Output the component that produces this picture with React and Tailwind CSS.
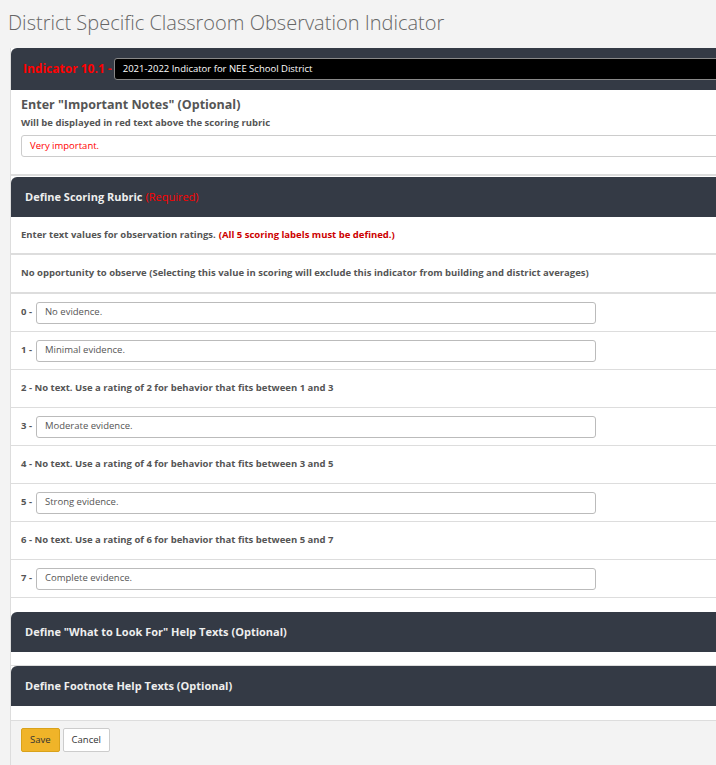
export default function App() {
  const rows = [
    { n: '0', v: 'No evidence.' },
    { n: '1', v: 'Minimal evidence.' },
    { n: '2', t: 'No text. Use a rating of 2 for behavior that fits between 1 and 3' },
    { n: '3', v: 'Moderate evidence.' },
    { n: '4', t: 'No text. Use a rating of 4 for behavior that fits between 3 and 5' },
    { n: '5', v: 'Strong evidence.' },
    { n: '6', t: 'No text. Use a rating of 6 for behavior that fits between 5 and 7' },
    { n: '7', v: 'Complete evidence.' },
  ];
  return (
    <div className="h-[765px] w-[716px] overflow-hidden bg-[#f3f3f3] text-[#555]" style={{ fontFamily: '"Open Sans", sans-serif' }}>
      <h1 className="h-[48px] pl-[8px] pt-[9px] text-[20px] font-light leading-[28px] text-[#666]">
        District Specific Classroom Observation Indicator
      </h1>
      <div className="ml-[10px] w-[740px] border-l border-[#ddd] bg-white">
        <div className="flex h-[42px] items-center rounded-tl-[6px] bg-[#343a45] pl-[12px]">
          <span className="text-[12px] font-bold text-[#f00]">Indicator 10.1 -</span>
          <div className="ml-[2px] flex h-[22px] flex-1 items-center rounded-[3px] border border-[#888] bg-black pl-[8px] text-[9.5px] text-white">
            2021-2022 Indicator for NEE School District
          </div>
        </div>
        <div className="h-[86px] border-b-2 border-[#ddd] pl-[10px] pt-[6px]">
          <div className="text-[12.5px] font-bold leading-[18px]">Enter "Important Notes" (Optional)</div>
          <div className="mt-[2px] text-[9.5px] font-bold leading-[14px]">Will be displayed in red text above the scoring rubric</div>
          <div className="mt-[5px] flex h-[22px] items-center rounded-[3px] border border-[#ccc] pl-[8px] text-[9.5px] text-[#f00]">
            Very important.
          </div>
        </div>
        <div className="mt-[1px] flex h-[40px] items-center rounded-tl-[6px] bg-[#343a45] pl-[14px] text-[11px] font-bold text-[#eee]">
          Define Scoring Rubric <span className="ml-[3px] font-normal text-[#f00]">(Required)</span>
        </div>
        <div className="flex h-[38px] items-center border-b-2 border-[#ddd] pl-[10px] text-[9.5px] font-bold">
          Enter text values for observation ratings.<span className="ml-[3px] text-[#c00]">(All 5 scoring labels must be defined.)</span>
        </div>
        <div className="flex h-[39px] items-center border-b-2 border-[#ddd] pl-[10px] text-[9.5px] font-bold">
          No opportunity to observe (Selecting this value in scoring will exclude this indicator from building and district averages)
        </div>
        {rows.map((r) => (
          <div key={r.n} className="flex h-[38px] items-center border-b border-[#ddd] pl-[10px] text-[9.5px] font-bold">
            {r.t ? (
              <span>{r.n} - {r.t}</span>
            ) : (
              <>
                <span className="mr-[4px]">{r.n} -</span>
                <div className="flex h-[22px] w-[560px] items-center rounded-[3px] border border-[#bbb] pl-[8px] font-normal">{r.v}</div>
              </>
            )}
          </div>
        ))}
        <div className="h-[14px] bg-white" />
        <div className="flex h-[40px] items-center rounded-tl-[6px] bg-[#343a45] pl-[14px] text-[11px] font-bold text-[#eee]">
          Define "What to Look For" Help Texts (Optional)
        </div>
        <div className="h-[14px] border-b border-[#ddd] bg-white" />
        <div className="flex h-[40px] items-center rounded-tl-[6px] bg-[#343a45] pl-[14px] text-[11px] font-bold text-[#eee]">
          Define Footnote Help Texts (Optional)
        </div>
        <div className="h-[15px] border-b border-[#ddd] bg-white" />
        <div className="flex h-[60px] items-start gap-[3px] bg-[#f3f3f3] pl-[10px] pt-[7px] text-[9.5px]">
          <button className="h-[24px] rounded-[2px] border border-[#d9a21b] bg-[#f0b429] px-[8px] text-[#333]">Save</button>
          <button className="h-[24px] rounded-[2px] border border-[#ccc] bg-white px-[8px] text-[#333]">Cancel</button>
        </div>
      </div>
    </div>
  );
}
